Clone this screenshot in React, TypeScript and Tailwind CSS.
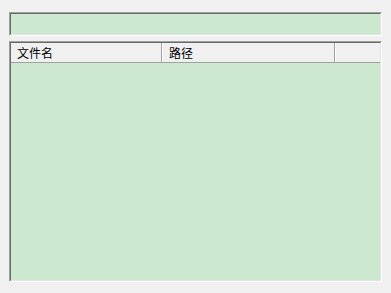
export default function App() {
  return (
    <div
      className="w-[391px] h-[293px] bg-[#f0f0f0] pl-[9px] pt-[12px] flex flex-col gap-[5px]"
      style={{ fontFamily: '"Noto Sans CJK SC", "Noto Sans", sans-serif' }}
    >
      {/* search box */}
      <div className="w-[373px] h-[24px] border-t border-l border-[#a0a0a0] border-b-white border-r-white border-b border-r">
        <div className="w-full h-full border-t border-l border-[#696969] border-b border-r border-b-[#e3e3e3] border-r-[#e3e3e3] bg-[#cce8cf]" />
      </div>

      {/* list */}
      <div className="w-[373px] h-[241px] border-t border-l border-[#a0a0a0] border-b-white border-r-white border-b border-r">
        <div className="w-full h-full flex flex-col border-t border-l border-[#696969] border-b border-r border-b-[#e3e3e3] border-r-[#e3e3e3] bg-[#cce8cf]">
          <div className="h-[20px] flex bg-[#f0f0f0] border-b border-[#a0a0a0] text-[12px] leading-[20px] text-black">
            <div className="w-[151px] pl-[6px] border-r border-[#a0a0a0]">文件名</div>
            <div className="w-px bg-white" />
            <div className="w-[172px] pl-[6px] border-r border-[#a0a0a0]">路径</div>
            <div className="w-px bg-white" />
            <div className="flex-1" />
          </div>
        </div>
      </div>
    </div>
  )
}
